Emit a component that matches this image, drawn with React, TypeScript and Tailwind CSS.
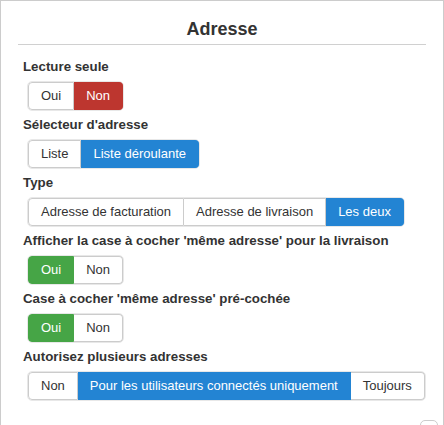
import React from "react";

type Opt = { label: string; active?: "red" | "blue" | "green" };

function Group({ options }: { options: Opt[] }) {
  return (
    <div className="ml-[26px] inline-flex border border-[#e8e8e8] rounded-[5px]">
      {options.map((o, i) => {
        const first = i === 0;
        const last = i === options.length - 1;
        const color =
          o.active === "red"
            ? "bg-[#bd362f] border-[#bd362f] text-white"
            : o.active === "blue"
            ? "bg-[#2384d3] border-[#2384d3] text-white"
            : o.active === "green"
            ? "bg-[#46a546] border-[#46a546] text-white"
            : "bg-white border-[#cccccc] text-[#333333]";
        return (
          <div
            key={i}
            className={
              "h-[28px] px-3 flex items-center text-[13px] leading-[18px] border " +
              color +
              (first ? " rounded-l-[4px]" : " border-l-0") +
              (last ? " rounded-r-[4px]" : "")
            }
          >
            {o.label}
          </div>
        );
      })}
    </div>
  );
}

function Row({ label, options }: { label: string; options: Opt[] }) {
  return (
    <div className="flex flex-col">
      <div className="pl-[22px] text-[13.3px] leading-[20px] font-bold text-[#333333]">{label}</div>
      <div className="mt-[4px] mb-[4px] flex">
        <Group options={options} />
      </div>
    </div>
  );
}

export default function App() {
  return (
    <div
      className="relative w-[444px] h-[425px] overflow-hidden bg-white"
      style={{ fontFamily: '"Liberation Sans", Arial, sans-serif' }}
    >
      <div className="w-[444px] h-[440px] border border-[#cccccc] border-b-0">
        <div className="pt-[17px] text-center text-[18px] leading-[22px] font-bold text-[#333333]">Adresse</div>
        <div className="mx-[17px] mt-[4px] h-px bg-[#d0d0d0]" />
        <div className="mt-[12px]">
          <Row label="Lecture seule" options={[{ label: "Oui" }, { label: "Non", active: "red" }]} />
          <Row
            label="Sélecteur d'adresse"
            options={[{ label: "Liste" }, { label: "Liste déroulante", active: "blue" }]}
          />
          <Row
            label="Type"
            options={[
              { label: "Adresse de facturation" },
              { label: "Adresse de livraison" },
              { label: "Les deux", active: "blue" },
            ]}
          />
          <Row
            label="Afficher la case à cocher 'même adresse' pour la livraison"
            options={[{ label: "Oui", active: "green" }, { label: "Non" }]}
          />
          <Row
            label="Case à cocher 'même adresse' pré-cochée"
            options={[{ label: "Oui", active: "green" }, { label: "Non" }]}
          />
          <Row
            label="Autorisez plusieurs adresses"
            options={[
              { label: "Non" },
              { label: "Pour les utilisateurs connectés uniquement", active: "blue" },
              { label: "Toujours" },
            ]}
          />
        </div>
      </div>
      <div className="absolute left-[420px] top-[420px] w-[18px] h-[20px] rounded-[5px] border border-[#cccccc] bg-white" />
    </div>
  );
}
